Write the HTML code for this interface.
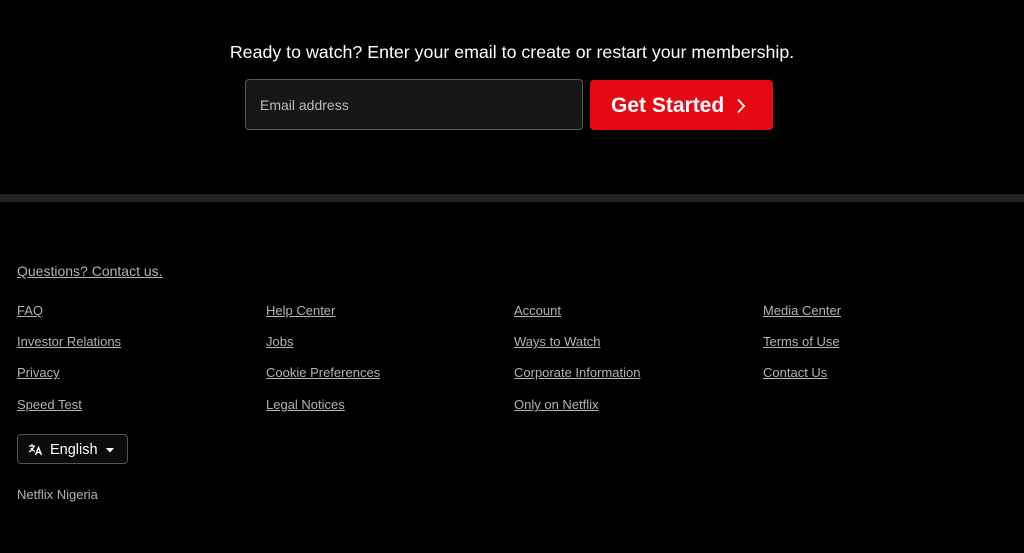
<!DOCTYPE html>
<html><head><style>
body{margin:0;background:#000;width:1024px;height:553px;overflow:hidden;font-family:"Liberation Sans",sans-serif;color:#fff;position:relative}
.t{position:absolute;top:41px;left:0;width:1024px;text-align:center;font-size:17.8px;line-height:22px}
.in{position:absolute;left:245px;top:79px;width:338px;height:51px;border:1px solid #5a5a5a;border-radius:4px;background:#161616;box-sizing:border-box}
.in span{position:absolute;left:14px;top:17px;font-size:14px;color:#bbb}
.btn{position:absolute;left:590px;top:80px;width:183px;height:50px;background:#e50914;border-radius:4px;font-size:21px;font-weight:bold}
.btn span{position:absolute;left:21px;top:14px}
.div{position:absolute;top:194px;left:0;width:1024px;height:8px;background:#232323}
a{position:absolute;color:#b3b3b3;font-size:13px;text-decoration:underline;line-height:16px;white-space:nowrap}
.lang{position:absolute;left:17px;top:434px;width:111px;height:30px;border:1px solid #555;border-radius:4px;box-sizing:border-box;background:#0b0b0b}
.lang span{position:absolute;left:32px;top:7px;font-size:14.5px}
.nn{position:absolute;left:17px;top:487px;font-size:13px;color:#b3b3b3}
</style></head><body>
<div class="t">Ready to watch? Enter your email to create or restart your membership.</div>
<div class="in"><span>Email address</span></div>
<div class="btn"><span>Get Started</span>
<svg style="position:absolute;left:146px;top:18px" width="10" height="16" viewBox="0 0 10 16"><path d="M2 1.5L8 8L2 14.5" stroke="#fff" stroke-width="1.8" fill="none"/></svg></div>
<div class="div"></div>
<a style="left:17px;top:263px;font-size:14px">Questions? Contact us.</a>
<a style="left:17px;top:303px">FAQ</a>
<a style="left:17px;top:334px">Investor Relations</a>
<a style="left:17px;top:365px">Privacy</a>
<a style="left:17px;top:397px">Speed Test</a>
<a style="left:266px;top:303px">Help Center</a>
<a style="left:266px;top:334px">Jobs</a>
<a style="left:266px;top:365px">Cookie Preferences</a>
<a style="left:266px;top:397px">Legal Notices</a>
<a style="left:514px;top:303px">Account</a>
<a style="left:514px;top:334px">Ways to Watch</a>
<a style="left:514px;top:365px">Corporate Information</a>
<a style="left:514px;top:397px">Only on Netflix</a>
<a style="left:763px;top:303px">Media Center</a>
<a style="left:763px;top:334px">Terms of Use</a>
<a style="left:763px;top:365px">Contact Us</a>
<div class="lang">
<svg style="position:absolute;left:10px;top:8px" width="16" height="13" viewBox="0 0 16 13"><path d="M1 3H7M4 1V3M6 3C5 6 3 8 1 9M3 5C4 7 5 8 7 8" stroke="#fff" stroke-width="1.3" fill="none"/><path d="M7.5 12L10.5 4.5L13.5 12M8.6 9.5H12.4" stroke="#fff" stroke-width="1.4" fill="none"/></svg>
<span>English</span>
<svg style="position:absolute;left:88px;top:13px" width="8" height="5" viewBox="0 0 8 5"><path d="M0 0H8L4 4.5Z" fill="#fff"/></svg>
</div>
<div class="nn">Netflix Nigeria</div>
</body></html>
